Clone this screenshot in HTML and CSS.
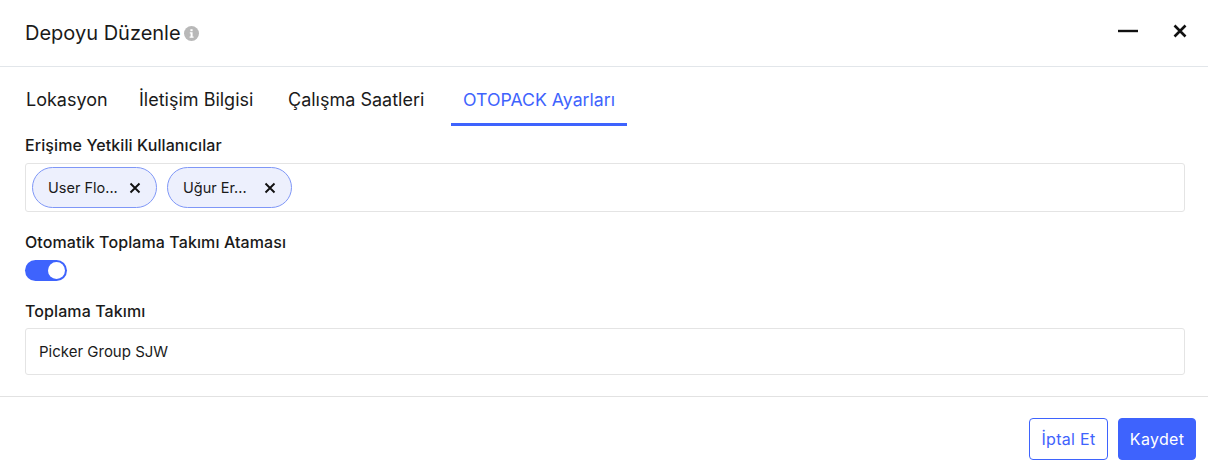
FILE: index.html
```html
<!DOCTYPE html>
<html lang="en">

<head>
    <meta charset="UTF-8">
    <title>Depoyu Düzenle</title>
    <link rel="stylesheet" href="styles.css">
</head>

<body>
    <div class="modal">
        <!-- Header -->
        <div class="modal-header">
            <div class="modal-title">
                <h1>Depoyu Düzenle</h1>
                <svg class="info-icon" width="15" height="15" viewBox="0 0 15 15">
                    <circle cx="7.5" cy="7.5" r="7.5" fill="#b8b8b8"/>
                    <rect x="6.4" y="3.2" width="2.2" height="2" fill="#fff"/>
                    <path d="M5.8 6.3h2.8v4.2h1v1.2H5.6v-1.2h1V7.5h-.8z" fill="#fff"/>
                </svg>
            </div>
            <div class="modal-actions">
                <svg width="20" height="4" viewBox="0 0 20 4">
                    <path d="M0 2h20" stroke="#111" stroke-width="2.4"/>
                </svg>
                <svg width="14" height="14" viewBox="0 0 14 14">
                    <path d="M1.5 1.5l11 11M12.5 1.5l-11 11" stroke="#111" stroke-width="2.6"/>
                </svg>
            </div>
        </div>

        <!-- Tabs -->
        <div class="tabs">
            <div class="tab">Lokasyon</div>
            <div class="tab">İletişim Bilgisi</div>
            <div class="tab">Çalışma Saatleri</div>
            <div class="tab active">OTOPACK Ayarları</div>
        </div>

        <!-- Form -->
        <div class="form">
            <div class="form-label">Erişime Yetkili Kullanıcılar</div>
            <div class="chip-box">
                <div class="chip">
                    <span class="chip-text">User Flo...</span>
                    <svg width="12" height="12" viewBox="0 0 12 12">
                        <path d="M1.5 1.5l9 9M10.5 1.5l-9 9" stroke="#111" stroke-width="1.9"/>
                    </svg>
                </div>
                <div class="chip">
                    <span class="chip-text">Uğur Er...</span>
                    <svg width="12" height="12" viewBox="0 0 12 12">
                        <path d="M1.5 1.5l9 9M10.5 1.5l-9 9" stroke="#111" stroke-width="1.9"/>
                    </svg>
                </div>
            </div>

            <div class="form-label toggle-label">Otomatik Toplama Takımı Ataması</div>
            <div class="toggle"><div class="toggle-knob"></div></div>

            <div class="form-label team-label">Toplama Takımı</div>
            <div class="text-input">Picker Group SJW</div>
        </div>

        <!-- Footer -->
        <div class="modal-footer">
            <button class="btn btn-outline" type="button">İptal Et</button>
            <button class="btn btn-primary" type="button">Kaydet</button>
        </div>
    </div>
</body>

</html>
```

FILE: styles.css
```css
/* Basic styling */
body {
    font-family: Inter, Lato, sans-serif;
    margin: 0;
    padding: 0;
    background-color: #fff;
    color: #1a1a1a;
}

.modal {
    width: 1208px;
    height: 474px;
    overflow: hidden;
}

.modal-header {
    display: flex;
    align-items: center;
    justify-content: space-between;
    height: 66px;
    padding: 0 21px 0 25px;
    border-bottom: 1px solid #e2e6ea;
}

.modal-title {
    display: flex;
    align-items: center;
    gap: 3px;
}

.modal-title h1 {
    margin: 0;
    font-size: 20px;
    font-weight: 400;
    line-height: 24px;
}

.modal-actions {
    display: flex;
    align-items: center;
    gap: 35px;
    margin-top: -4px;
}

.modal-actions svg {
    display: block;
}

/* Columns set the place of each tab, the last one holds the underline */
.tabs {
    display: grid;
    grid-template-columns: 113px 149px 175px 176px;
    height: 58px;
    padding-left: 14px;
}

.tab {
    padding-left: 12px;
    font-size: 18px;
    line-height: 66px;
}

.tab.active {
    height: 56px;
    font-size: 17.7px;
    color: #3e63fd;
    border-bottom: 3px solid #3e63fd;
}

.form {
    padding: 0 23px 0 25px;
}

.form-label {
    font-size: 16px;
    font-weight: 450;
    line-height: 20px;
    letter-spacing: 0.1px;
    margin-top: 10px;
}

.chip-box {
    display: flex;
    gap: 10px;
    height: 49px;
    margin-top: 8px;
    padding: 3px 6px;
    box-sizing: border-box;
    border: 1px solid #e4e4e4;
    border-radius: 3px;
}

.chip {
    display: flex;
    align-items: center;
    justify-content: space-between;
    width: 125px;
    height: 41px;
    padding: 0 15px;
    box-sizing: border-box;
    background: #edf0fd;
    border: 1px solid #7f97f7;
    border-radius: 21px;
    font-size: 14.5px;
}

.toggle-label {
    margin-top: 20px;
}

.toggle {
    display: flex;
    align-items: center;
    justify-content: flex-end;
    width: 42px;
    height: 21px;
    margin-top: 8px;
    padding-right: 2px;
    box-sizing: border-box;
    background: #3e63fd;
    border-radius: 11px;
}

.toggle-knob {
    width: 17px;
    height: 17px;
    background: #fff;
    border-radius: 50%;
}

.team-label {
    margin-top: 20px;
}

.text-input {
    height: 47px;
    margin-top: 7px;
    padding-left: 13px;
    box-sizing: border-box;
    border: 1px solid #e4e4e4;
    border-radius: 3px;
    font-size: 15px;
    line-height: 45px;
}

.modal-footer {
    display: flex;
    justify-content: flex-end;
    gap: 10px;
    margin-top: 21px;
    padding: 21px 12px 0 0;
    border-top: 1px solid #e2e2e2;
}

.btn {
    height: 42px;
    padding: 0;
    border-radius: 4px;
    font-family: inherit;
    font-size: 16px;
    letter-spacing: 0.3px;
}

.btn-outline {
    width: 79px;
    color: #3e63fd;
    background: #fff;
    border: 1px solid #3e63fd;
}

.btn-primary {
    width: 78px;
    color: #fff;
    background: #3e63fd;
    border: 1px solid #3e63fd;
}
```
